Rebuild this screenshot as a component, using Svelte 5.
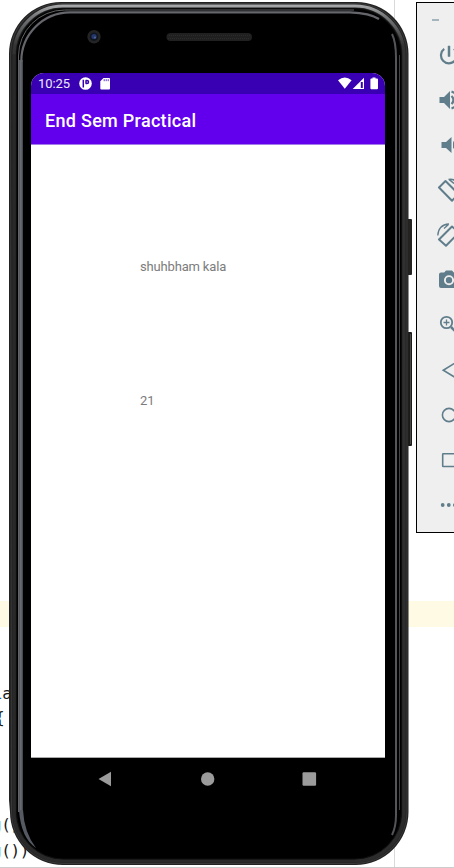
<script>
  const tools = ['power', 'volumeUp', 'volumeDown', 'rotateLeft', 'rotateRight', 'camera', 'zoom', 'back', 'home', 'overview', 'more'];
  const fields = ['shuhbham kala', '21'];
</script>

<main class="desktop">
  <div class="highlight"></div>
  <div class="divider"></div>
  <div class="baseline"></div>
  <div class="code" style:top="684px"><span class="blue">l</span>a</div>
  <div class="code brace" style:top="708px">&#123;</div>
  <div class="code call" style:top="815px"><span class="blue">g</span>()</div>
  <div class="code call" style:top="841px"><span class="blue">g</span>())</div>

  <section class="phone">
    <svg class="shell" width="404" height="866" viewBox="9 0 404 866">
      <defs>
        <linearGradient id="edge" gradientUnits="userSpaceOnUse" x1="0" x2="0" y1="3" y2="865">
          <stop offset="0" stop-color="#b0b2b4" />
          <stop offset=".015" stop-color="#77797b" />
          <stop offset=".05" stop-color="#333" />
          <stop offset="1" stop-color="#2b2b2b" />
        </linearGradient>
        <linearGradient id="side" x1="0" x2="1" y1="0" y2="0">
          <stop offset="0" stop-color="#4c5056" />
          <stop offset=".45" stop-color="#6b7078" />
          <stop offset="1" stop-color="#3c4046" />
        </linearGradient>
      </defs>
      <rect x="406" y="219" width="6" height="56" rx="1" fill="#242321" />
      <rect x="406" y="332" width="6" height="114" rx="1" fill="#1b1b1a" />
      <path d="M410.500 334v110" stroke="#494846" />
      <path d="M9 54A52 52 0 0 1 61 2H356A52 52 0 0 1 408.500 54V812A53 53 0 0 1 355.500 865H63A53 53 0 0 1 10 812L9 800Z" fill="#222" />
      <path d="M10.500 54A50.500 50.500 0 0 1 61 3.500H356A51 51 0 0 1 407 54.500V812A51.500 51.500 0 0 1 355.500 863.500H63A51.500 51.500 0 0 1 11.500 812Z" fill="none" stroke="#383838" />
      <path d="M14 55A49 49 0 0 1 63 6H355A49 49 0 0 1 404 55V812A49 49 0 0 1 355 861" fill="none" stroke="url(#edge)" stroke-width="3" />
      <path d="M14 54V812A49 49 0 0 0 63 861H355" fill="none" stroke="#292929" stroke-width="3" />
      <path d="M16.500 812V55.500A47 47 0 0 1 63.500 8.500H354.500A47 47 0 0 1 401.500 55.500V812A47 47 0 0 1 354.500 859H63.500A47 47 0 0 1 16.500 812Z" fill="#000" stroke="#0d0d0d" />
      <path d="M18.500 812V56A46 46 0 0 1 64.500 10H354" fill="none" stroke="#606264" />
      <path d="M399.500 55V810" stroke="#414143" />
      <rect x="19" y="60" width="4" height="752" fill="url(#side)" />
      <path d="M21.300 62A49 49 0 0 1 70 12.300H350Q370 13 379 19" fill="none" stroke="#65666c" stroke-width="2.200" />
      <path d="M392 34Q396 42 396 58V815Q396 827 392 835" fill="none" stroke="#55545b" stroke-width="2" />
      <path d="M19 810Q21 838 36 848Q24 832 23 810Z" fill="#555a62" />
      <circle cx="94" cy="36.700" r="6.700" fill="#242424" />
      <circle cx="94" cy="36.700" r="4.200" fill="#101522" />
      <circle cx="94" cy="36.500" r="2.600" fill="#243969" />
      <circle cx="95" cy="37.500" r="1" fill="#536798" />
      <rect x="166.500" y="33" width="85.500" height="8" rx="4" fill="#202020" />
      <path d="M169 35.500H250M168 38.500H249" stroke="#2c2c2c" stroke-dasharray="1 1" />
    </svg>

    <div class="screen">
      <header class="status">
        <span class="time">10:25</span>
        <svg class="notice" width="13" height="13" viewBox="0 0 13 13">
          <circle cx="6.500" cy="6.500" r="6.300" fill="#fff" />
          <path d="M4.300 2.800V10.500M7 3.200V6.700M6.700 3.500H8Q9.500 3.500 9.500 5T8 6.500H6.700" fill="none" stroke="#3900b3" stroke-width="1.500" />
        </svg>
        <svg class="card" width="11" height="12" viewBox="0 0 11 12">
          <path d="M3.500 0H9Q10 0 10 1V10.500Q10 11.500 9 11.500H1.300Q.3 11.500 .3 10.500V3.200Z" fill="#fff" />
          <path d="M4.200 1.200V3.200M6.200 1.200V3.200M8.200 1.200V3.200" stroke="#3900b3" stroke-width=".8" />
        </svg>
        <svg class="signals" width="42" height="13" viewBox="0 0 42 13">
          <path d="M0 3.200Q6.800-2 13.600 3.200L6.800 11.800Z" fill="#fff" />
          <path d="M26 .8V12H14.700Z" fill="#fff" />
          <path d="M22.800 5H24.800V11H22.800Z" fill="#3900b3" />
          <path d="M34.500 .4H37.500V1.600H39Q40 1.600 40 2.600V11.200Q40 12.200 39 12.200H33.300Q32.400 12.200 32.400 11.200V2.600Q32.400 1.600 33.300 1.600H34.500Z" fill="#fff" />
        </svg>
      </header>
      <div class="appbar">End Sem Practical</div>
      <div class="content">
        {#each fields as field}
          <p>{field}</p>
        {/each}
      </div>
    </div>

    <nav class="nav">
      <svg width="220" height="16" viewBox="0 0 220 16">
        <path d="M.5 8L13 .8V15.200Z" fill="#9b9b9b" />
        <circle cx="109.700" cy="8" r="6.700" fill="#9b9b9b" />
        <rect x="204.500" y="1.200" width="13.600" height="13.600" rx="1.200" fill="#9b9b9b" />
      </svg>
    </nav>
  </section>

  <aside class="toolbar">
    <div class="minimize"></div>
    {#each tools as tool}
      <div class="tool">
        <svg width="24" height="24" viewBox="0 0 24 24">
          {#if tool === 'power'}
            <path d="M13 3h-2v10.500h2V3z" fill="#607d8b" stroke="#607d8b" stroke-width=".5" />
            <path d="M7.200 5.900A8 8 0 1 0 16.800 5.900" fill="none" stroke="#607d8b" stroke-width="2.200" />
          {:else if tool === 'volumeUp'}
            <path d="M2.500 9V15H7L13 21V3L7 9Z" fill="#607d8b" />
            <path d="M14.500 8Q18.500 12 14.500 16M14.500 3.500Q21 6 21 12T14.500 20.500" fill="none" stroke="#607d8b" stroke-width="2.200" />
          {:else if tool === 'volumeDown'}
            <path d="M4.500 9v6h4.500l5.500 5V4L9 9Z" fill="#607d8b" />
            <path d="M16 8Q20 12 16 16Z" fill="#607d8b" />
          {:else if tool === 'rotateLeft'}
            <path d="M2 9.500L8.500 3L21.500 16L15 22.700Z" fill="none" stroke="#607d8b" stroke-width="2" stroke-linejoin="round" />
            <path d="M11.500 1.500Q20 0 22.500 10M12 1.500L17 5.500" fill="none" stroke="#607d8b" stroke-width="1.600" />
          {:else if tool === 'rotateRight'}
            <path d="M2 16.500L15 3.500L22 9.500L9 22.700Z" fill="none" stroke="#607d8b" stroke-width="2" stroke-linejoin="round" />
            <path d="M.8 12.500Q1.300 1.800 12 1M11.500 1.500L7 5.500" fill="none" stroke="#607d8b" stroke-width="1.300" />
          {:else if tool === 'camera'}
            <path d="M9 2.500L7.200 4.500H4Q2 4.500 2 6.500V18Q2 20 4 20H20Q22 20 22 18V6.500Q22 4.500 20 4.500H16.800L15 2.500Z" fill="#607d8b" />
            <circle cx="12" cy="12.200" r="4.100" fill="#607d8b" stroke="#efefef" stroke-width="1.900" />
          {:else if tool === 'zoom'}
            <circle cx="9.500" cy="9.500" r="5.700" fill="none" stroke="#607d8b" stroke-width="1.800" />
            <path d="M6.500 9.500H12.500M9.500 6.500V12.500" stroke="#607d8b" stroke-width="1.300" />
            <path d="M14 14L20 20" stroke="#607d8b" stroke-width="2.500" />
          {:else if tool === 'back'}
            <path d="M6.300 12.200L20 3.800V20.600Z" fill="none" stroke="#607d8b" stroke-width="1.600" />
          {:else if tool === 'home'}
            <circle cx="12" cy="12" r="6.600" fill="none" stroke="#607d8b" stroke-width="1.600" />
          {:else if tool === 'overview'}
            <rect x="5.700" y="5.700" width="13" height="12.800" rx=".5" fill="none" stroke="#607d8b" stroke-width="1.600" />
          {:else}
            <circle cx="5.700" cy="12" r="1.900" fill="#607d8b" />
            <circle cx="11.800" cy="12" r="1.900" fill="#607d8b" />
            <circle cx="17.900" cy="12" r="1.900" fill="#607d8b" />
          {/if}
        </svg>
      </div>
    {/each}
  </aside>
</main>

<style>
  .desktop {
    position: relative;
    width: 454px;
    height: 868px;
    overflow: hidden;
    background: #fff;
    font-family: Roboto, sans-serif;
  }
  .highlight {
    position: absolute;
    top: 601px;
    width: 100%;
    height: 26px;
    background: #fffae3;
  }
  .divider {
    position: absolute;
    left: 394px;
    width: 1px;
    height: 100%;
    background: #d9d9d9;
  }
  .baseline {
    position: absolute;
    top: 867px;
    width: 100%;
    height: 1px;
    background: #ccc;
  }
  .code {
    position: absolute;
    left: -7px;
    font: 16px/20px "DejaVu Sans Mono", monospace;
    letter-spacing: -0.4px;
    color: #171717;
  }
  .brace { left: -5px; }
  .call { left: -8px; }
  .blue { color: #1769aa; }
  .call .blue { color: #4ba3e8; }
  .phone {
    position: absolute;
    left: 9px;
    top: 0;
    width: 404px;
    height: 866px;
    box-sizing: border-box;
    padding: 73px 28px 0 22px;
  }
  .shell {
    position: absolute;
    left: 0;
    top: 0;
  }
  .screen {
    position: relative;
    display: flex;
    flex-direction: column;
    height: 684px;
    overflow: hidden;
    border-radius: 13px 13px 0 0;
    background: #fff;
    border-bottom: 1px solid #aaa;
  }
  .status {
    display: flex;
    align-items: center;
    height: 21px;
    padding: 0 5px 0 7px;
    background: #3900b3;
    color: #eee8fa;
  }
  .time {
    width: 41px;
    font-size: 13px;
    line-height: 22px;
    letter-spacing: -0.1px;
  }
  .card { margin-left: 8px; }
  .signals { margin-left: auto; }
  .appbar {
    height: 50px;
    padding-left: 14px;
    background: #6200ee;
    border-bottom: 1px solid #a47ce8;
    color: #fff;
    font-size: 18px;
    font-weight: 500;
    line-height: 53px;
    letter-spacing: 0.29px;
  }
  .content {
    display: flex;
    flex-direction: column;
    gap: 114px;
    padding: 112px 0 0 109px;
    color: #7c7c7c;
  }
  p {
    margin: 0;
    font-size: 13px;
    line-height: 20px;
    letter-spacing: -0.17px;
  }
  .nav {
    position: relative;
    display: flex;
    padding: 13px 0 0 67px;
  }
  .toolbar {
    position: absolute;
    left: 416px;
    top: 2px;
    width: 60px;
    height: 531px;
    box-sizing: border-box;
    border: 1px solid #000;
    background: #efefef;
  }
  .minimize {
    width: 7px;
    height: 2px;
    margin: 16px 0 11px 15px;
    background: #a4b5bd;
  }
  .tool {
    display: flex;
    align-items: center;
    height: 45.1px;
    padding-left: 20px;
  }
</style>
